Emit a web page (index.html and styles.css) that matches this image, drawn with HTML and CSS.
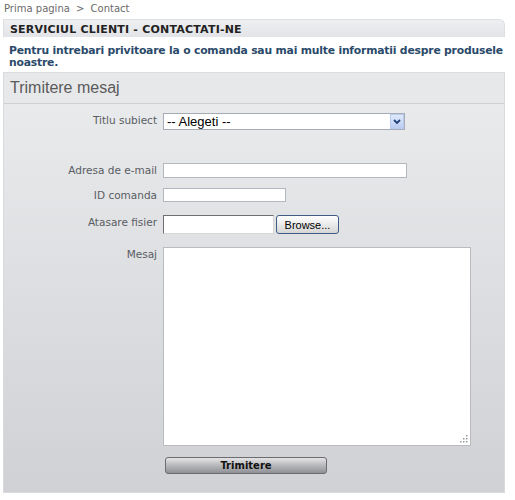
FILE: index.html
```html
<!DOCTYPE html>
<html lang="ro">
<head>
<meta charset="utf-8">
<title>Contact</title>
<link rel="stylesheet" href="styles.css">
</head>
<body>
<div class="crumb">Prima pagina <span class="sep">&gt;</span> Contact</div>
<div class="bar">SERVICIUL CLIENTI - CONTACTATI-NE</div>
<p class="intro"><span class="line">Pentru intrebari privitoare la o comanda sau mai multe informatii despre produsele</span><br><span class="line">noastre.</span></p>
<div class="panel">
  <div class="panel-head">Trimitere mesaj</div>
  <form class="panel-body">
    <div class="row row-subject">
      <label class="lbl">Titlu subiect</label>
      <div class="select">
        <span class="select-text">-- Alegeti --</span>
        <span class="select-btn">
          <svg width="8" height="6" viewBox="0 0 8 6"><path d="M1 1 L4 4 L7 1" fill="none" stroke="#1f3f7a" stroke-width="1.8"/></svg>
        </span>
      </div>
    </div>
    <div class="row row-email">
      <label class="lbl">Adresa de e-mail</label>
      <input class="inp inp-email" type="text">
    </div>
    <div class="row row-id">
      <label class="lbl">ID comanda</label>
      <input class="inp inp-id" type="text">
    </div>
    <div class="row row-file">
      <label class="lbl">Atasare fisier</label>
      <input class="inp-file" type="text">
      <button class="browse" type="button">Browse...</button>
    </div>
    <div class="row row-msg">
      <label class="lbl">Mesaj</label>
      <div class="ta-wrap">
        <textarea class="ta"></textarea>
        <svg class="grip" width="8" height="8" viewBox="0 0 8 8">
          <rect x="6" y="0" width="1.5" height="1.5" fill="#9a9a9a"/>
          <rect x="3" y="3" width="1.5" height="1.5" fill="#9a9a9a"/>
          <rect x="6" y="3" width="1.5" height="1.5" fill="#9a9a9a"/>
          <rect x="0" y="6" width="1.5" height="1.5" fill="#9a9a9a"/>
          <rect x="3" y="6" width="1.5" height="1.5" fill="#9a9a9a"/>
          <rect x="6" y="6" width="1.5" height="1.5" fill="#9a9a9a"/>
        </svg>
      </div>
    </div>
    <div class="row row-submit">
      <span class="lbl"></span>
      <button class="submit" type="button">Trimitere</button>
    </div>
  </form>
</div>
</body>
</html>
```
FILE: styles.css
```css
html, body {
  margin: 0;
  padding: 0;
  background: #ffffff;
}
body {
  font-family: "DejaVu Sans", Verdana, sans-serif;
  font-size: 11px;
  color: #555;
}
.crumb {
  height: 19px;
  line-height: 17px;
  padding-left: 4px;
  font-size: 10px;
  color: #6a6a6a;
}
.crumb .sep {
  margin: 0 3px;
}
.bar {
  margin: 0 10px 0 3px;
  height: 18px;
  line-height: 19px;
  padding-left: 6px;
  background: linear-gradient(#eeeff1, #e3e4e7);
  border: 1px solid #dedfe1;
  border-bottom: none;
  border-radius: 0 6px 0 0;
  font-weight: bold;
  letter-spacing: 0.2px;
  color: #222;
  box-sizing: border-box;
}
.intro {
  margin: 0;
  padding: 8px 0 3px 9px;
  height: 35px;
  box-sizing: border-box;
  line-height: 12px;
  font-weight: bold;
  color: #2b4a6a;
}
.intro .line {
  white-space: nowrap;
  font-size: 10.8px;
  letter-spacing: -0.2px;
}
.panel {
  margin: 0 10px 0 3px;
  border: 1px solid #d9dadc;
  border-top-color: #dcdcde;
}
.panel-head {
  height: 30px;
  line-height: 30px;
  padding-left: 6px;
  background: #e7e8ea;
  border-bottom: 1px solid #cfd0d2;
  font-family: "Liberation Sans", Arial, sans-serif;
  font-size: 16px;
  color: #5a5a5a;
}
.panel-body {
  margin: 0;
  padding: 9px 0 18px 0;
  background: linear-gradient(#e9eaec, #d0d1d4);
}
.row {
  display: flex;
  align-items: flex-start;
}
.lbl {
  width: 153px;
  flex: none;
  text-align: right;
  padding-right: 6px;
  padding-top: 1px;
  font-size: 10.5px;
  color: #595d63;
}
.row-email { margin-top: 33px; }
.row-id { margin-top: 10px; }
.row-file { margin-top: 13px; }
.row-msg { margin-top: 13px; }
.row-submit { margin-top: 11px; }

.select {
  position: relative;
  width: 242px;
  height: 17px;
  box-sizing: border-box;
  border: 1px solid #a5acb5;
  background: #fff;
  font-family: "Liberation Sans", Arial, sans-serif;
  font-size: 13px;
  color: #000;
  line-height: 15px;
}
.select-text {
  padding-left: 3px;
}
.select-btn {
  position: absolute;
  right: 0;
  top: 0;
  width: 14px;
  height: 15px;
  box-sizing: border-box;
  border: 1px solid #b8cbef;
  background: linear-gradient(#e0e9fb, #b9cdf3);
  display: flex;
  align-items: center;
  justify-content: center;
}
.inp {
  display: block;
  margin: 0;
  padding: 0 2px;
  height: 15px;
  box-sizing: border-box;
  border: 1px solid #b4b7bd;
  background: #fff;
  font-family: "Liberation Sans", Arial, sans-serif;
  font-size: 12px;
}
.inp-email { width: 244px; }
.inp-id { width: 123px; height: 14px; }
.inp-file {
  display: block;
  margin: 0;
  width: 111px;
  height: 19px;
  box-sizing: border-box;
  border: 1px solid #d8d8d8;
  border-top-color: #6f6f6f;
  border-left-color: #6f6f6f;
  background: #fff;
}
.browse {
  margin: 0 0 0 2px;
  width: 63px;
  height: 19px;
  box-sizing: border-box;
  padding: 0;
  border: 1px solid #3e5c84;
  border-radius: 3px;
  background: linear-gradient(#ffffff, #e6e6e6 60%, #d6d6d6);
  font-family: "Liberation Sans", Arial, sans-serif;
  font-size: 11px;
  color: #000;
}
.ta-wrap {
  position: relative;
  width: 308px;
  height: 199px;
}
.ta {
  display: block;
  margin: 0;
  width: 308px;
  height: 199px;
  box-sizing: border-box;
  border: 1px solid #b9bbbf;
  background: #fff;
  resize: none;
}
.grip {
  position: absolute;
  right: 3px;
  bottom: 3px;
}
.submit {
  margin: 0 0 0 2px;
  width: 162px;
  height: 17px;
  box-sizing: border-box;
  padding: 0;
  border: 1px solid #6c6c70;
  border-radius: 3px;
  background: linear-gradient(#e4e4e6, #b8b8bc 50%, #8f9095);
  font-family: "DejaVu Sans", Verdana, sans-serif;
  font-size: 10px;
  font-weight: bold;
  color: #111;
}
```
